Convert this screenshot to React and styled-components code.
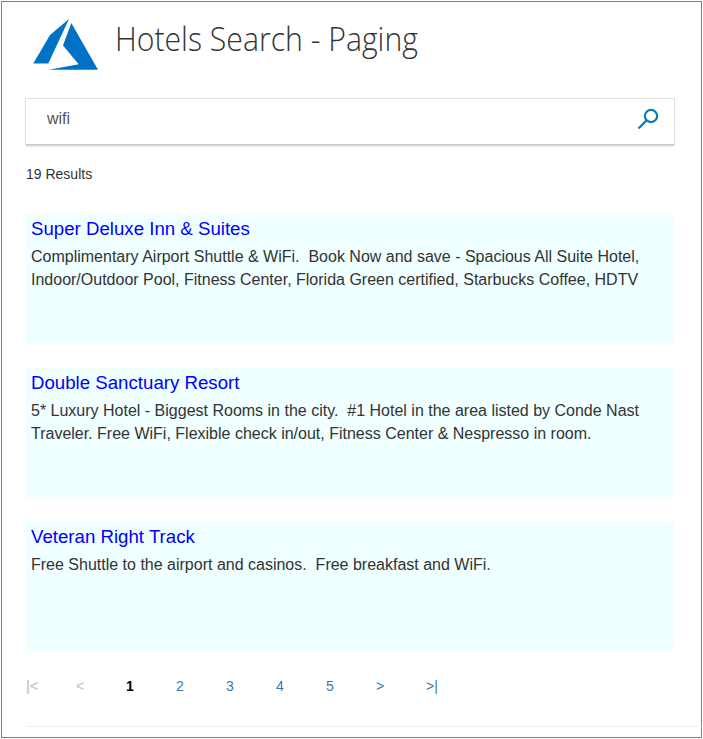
import React from "react";
import styled, { createGlobalStyle } from "styled-components";

const GlobalStyle = createGlobalStyle`
  * { box-sizing: border-box; }
  body {
    margin: 0;
    background: #fff;
    color: #333;
    font-family: "Liberation Sans", Arial, sans-serif;
    overflow: hidden;
  }
`;

const Frame = styled.div`
  width: 701px;
  height: 737px;
  margin: 1px;
  border: 1px solid #808080;
  padding: 0 0 0 24px;
`;

const Header = styled.header`
  display: flex;
  height: 96px;
`;

const Logo = styled.svg`
  width: 66px;
  height: 54px;
  margin: 16px 0 0 6px;
`;

const Title = styled.h1`
  margin: 14px 0 0 17px;
  font: 300 33px/46px "Open Sans", sans-serif;
  color: #333;
  white-space: nowrap;
  transform: scaleX(0.915);
  transform-origin: left center;
`;

const SearchBox = styled.div`
  display: flex;
  justify-content: space-between;
  width: 650px;
  height: 47px;
  margin-left: -1px;
  padding: 9px 15px 0 21px;
  border: 1px solid #e0e0e0;
  border-bottom-color: #c8c8c8;
  box-shadow: 0 2px 2px -1px rgba(0, 0, 0, 0.22);
`;

const Query = styled.input`
  width: 400px;
  height: 22px;
  padding: 0;
  border: 0;
  outline: 0;
  font: 16px/22px "Liberation Sans", Arial, sans-serif;
  color: #555;
`;

const SearchButton = styled.button`
  display: block;
  width: 22px;
  height: 22px;
  padding: 0;
  border: 0;
  background: none;

  svg { display: block; }
`;

const Count = styled.p`
  margin: 19px 0 30px;
  font-size: 14px;
  line-height: 20px;
`;

const Results = styled.section`
  display: flex;
  flex-direction: column;
  gap: 24px;
  width: 648px;
`;

const Card = styled.article`
  height: 130px;
  padding: 3px 5px 0;
  background: #f0ffff;
`;

const Name = styled.h2`
  margin: 0 0 5px;
  font-size: 18.67px;
  font-weight: 400;
  line-height: 23px;
  color: #0000ff;
`;

const Description = styled.p`
  margin: 0;
  font-size: 16px;
  line-height: 23px;

  span { white-space: pre; }
`;

const Pager = styled.nav`
  display: grid;
  grid-template-columns: repeat(9, 50px);
  margin-top: 24px;
  height: 50px;
`;

const tones = { disabled: "#ccc", current: "#000", link: "#337ab7" };

const Page = styled.span`
  font-size: 14px;
  line-height: 20px;
  font-weight: ${(p) => (p.$tone === "link" ? 400 : 700)};
  color: ${(p) => tones[p.$tone]};
`;

const Divider = styled.hr`
  width: 677px;
  height: 1px;
  margin: 0;
  border: 0;
  background: #ededed;
`;

const hotels = [
  {
    name: "Super Deluxe Inn & Suites",
    lines: [
      "Complimentary Airport Shuttle & WiFi.  Book Now and save - Spacious All Suite Hotel,",
      "Indoor/Outdoor Pool, Fitness Center, Florida Green certified, Starbucks Coffee, HDTV",
    ],
  },
  {
    name: "Double Sanctuary Resort",
    lines: [
      "5* Luxury Hotel - Biggest Rooms in the city.  #1 Hotel in the area listed by Conde Nast",
      "Traveler. Free WiFi, Flexible check in/out, Fitness Center & Nespresso in room.",
    ],
  },
  {
    name: "Veteran Right Track",
    lines: ["Free Shuttle to the airport and casinos.  Free breakfast and WiFi."],
  },
];

const pages = [
  ["|<", "disabled"],
  ["<", "disabled"],
  ["1", "current"],
  ["2", "link"],
  ["3", "link"],
  ["4", "link"],
  ["5", "link"],
  [">", "link"],
  [">|", "link"],
];

export default function App() {
  return (
    <>
      <GlobalStyle />
      <Frame>
        <Header>
          <Logo viewBox="32 18 66 54" aria-label="Azure">
            <path fill="#0072c6" d="M69 19 L50 35 L33.3 63.6 H48.3 Z" />
            <path fill="#0072c6" d="M71.3 23 L63 45.5 L78.7 64.2 L48.7 69.8 H98 Z" />
          </Logo>
          <Title>Hotels Search - Paging</Title>
        </Header>
        <SearchBox>
          <Query defaultValue="wifi" aria-label="Search" />
          <SearchButton aria-label="Search hotels">
            <svg width="22" height="22" viewBox="637 108 22 22" fill="none" stroke="#0080b0" strokeWidth="2.2">
              <circle cx="651" cy="116" r="6.1" />
              <path d="M646.6 120.4 L638.5 128.5" />
            </svg>
          </SearchButton>
        </SearchBox>
        <Count>19 Results</Count>
        <Results>
          {hotels.map((hotel) => (
            <Card key={hotel.name}>
              <Name>{hotel.name}</Name>
              <Description>
                {hotel.lines.map((line, i) => (
                  <React.Fragment key={line}>
                    {i > 0 && <br />}
                    <span>{line}</span>
                  </React.Fragment>
                ))}
              </Description>
            </Card>
          ))}
        </Results>
        <Pager>
          {pages.map(([label, tone]) => (
            <Page key={label} $tone={tone}>{label}</Page>
          ))}
        </Pager>
        <Divider />
      </Frame>
    </>
  );
}
